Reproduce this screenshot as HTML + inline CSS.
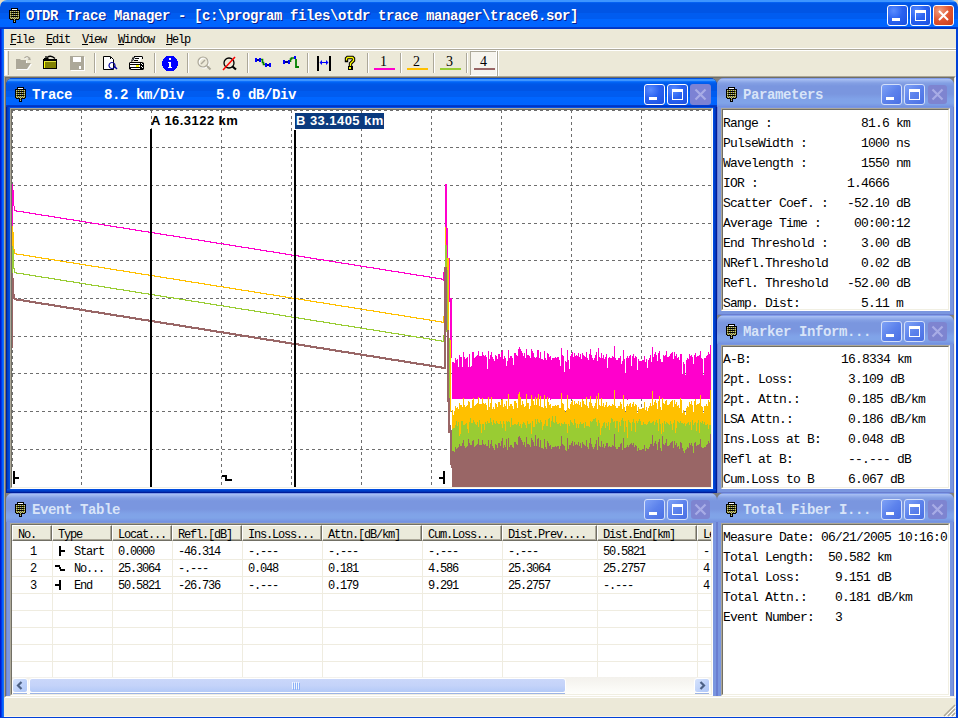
<!DOCTYPE html><html><head><meta charset="utf-8"><style>
*{margin:0;padding:0;box-sizing:border-box}
html,body{width:958px;height:718px;overflow:hidden;background:#E8DCC0;position:relative}
.abs{position:absolute}
.t14{font-family:'Liberation Mono', monospace;font-size:13px;letter-spacing:-0.8px;line-height:14px;white-space:pre;color:#000}
.t12{font-family:'Liberation Mono', monospace;font-size:12px;letter-spacing:-1.2px;line-height:12px;white-space:pre;color:#000}
.tb{font-family:'Liberation Mono', monospace;font-weight:bold;font-size:14px;letter-spacing:-0.4px;line-height:14px;white-space:pre}
.btn{position:absolute;width:21px;height:21px;border:1px solid #fff;border-radius:3px;
 background:radial-gradient(circle at 30% 25%,#5a8cff 0%,#2a62f0 45%,#1a4fe0 100%)}
.btnd{position:absolute;width:21px;height:21px;border-radius:3px;background:#8a90d8}
</style></head><body><svg width="0" height="0" style="position:absolute"><defs><pattern id="dth" width="2" height="2" patternUnits="userSpaceOnUse"><rect width="2" height="2" fill="#808000"/><rect width="1" height="1" fill="#B4B4B0"/><rect x="1" y="1" width="1" height="1" fill="#B4B4B0"/></pattern></defs></svg><div class="abs" style="left:0;top:0;width:958px;height:29px;background:linear-gradient(to bottom,#3D95FF 0px,#3D95FF 2px,#0A6AFF 2px,#0058E6 3px,#0055E5 5px,#0055E5 13px,#005CF0 13px,#005CF0 19px,#0066FF 19px,#0064FF 27px,#0040D0 27px,#0030C0 29px);border-radius:7px 7px 0 0"></div><svg class="abs" style="left:9px;top:8px" width="11" height="15" shape-rendering="crispEdges">
<rect x="2" y="0" width="7" height="3" fill="#000"/><rect x="3" y="1" width="5" height="1" fill="#fff"/>
<rect x="0" y="2" width="11" height="9" fill="#000"/><rect x="1" y="3" width="9" height="8" fill="url(#dth)"/>
<rect x="2" y="4" width="7" height="1" fill="#000"/><rect x="2" y="6" width="7" height="1" fill="#000"/><rect x="2" y="8" width="7" height="1" fill="#000"/>
<rect x="1" y="11" width="9" height="1" fill="#000"/>
<rect x="4" y="11" width="3" height="4" fill="#000"/><rect x="5" y="11" width="1" height="3" fill="url(#dth)"/>
</svg><div class="abs tb" style="left:26px;top:9px;color:#fff;text-shadow:1px 1px 0 #0A1E8E">OTDR Trace Manager - [c:\program files\otdr trace manager\trace6.sor]</div><div class="btn" style="left:887px;top:5px"><div class="abs" style="left:4px;top:12px;width:8px;height:3px;background:#fff"></div></div><div class="btn" style="left:910px;top:5px"><div class="abs" style="left:4px;top:4px;width:11px;height:11px;border:1px solid #fff;border-top-width:3px"></div></div><div class="abs" style="left:933px;top:5px;width:21px;height:21px;border:1px solid #fff;border-radius:3px;background:radial-gradient(circle at 30% 25%,#F0A080 0%,#E05530 50%,#C83A18 100%)">
<svg class="abs" style="left:0;top:0" width="19" height="19"><path d="M5 5 L14 14 M14 5 L5 14" stroke="#fff" stroke-width="2"/></svg></div><div class="abs" style="left:4px;top:29px;width:952px;height:47px;background:#ECE9D8"></div><div class="abs" style="left:4px;top:48px;width:952px;height:1px;background:#fff"></div><div class="abs" style="left:4px;top:49px;width:952px;height:1px;background:#ACA899"></div><div class="abs" style="left:4px;top:50px;width:952px;height:1px;background:#fff"></div><div class="abs" style="left:0;top:29px;width:1px;height:689px;background:#0019CF"></div><div class="abs" style="left:1px;top:29px;width:1px;height:689px;background:#0038E8"></div><div class="abs" style="left:2px;top:29px;width:1px;height:689px;background:#0060FF"></div><div class="abs" style="left:3px;top:29px;width:1px;height:689px;background:#1A6EF5"></div><div class="abs" style="left:956px;top:29px;width:2px;height:689px;background:#0040D8"></div><div class="abs" style="left:0;top:717px;width:958px;height:1px;background:#0040D8"></div><div class="abs t12" style="left:10px;top:34px"><u>F</u>ile</div><div class="abs t12" style="left:46px;top:34px"><u>E</u>dit</div><div class="abs t12" style="left:82px;top:34px"><u>V</u>iew</div><div class="abs t12" style="left:118px;top:34px"><u>W</u>indow</div><div class="abs t12" style="left:166px;top:34px"><u>H</u>elp</div><div class="abs" style="left:5px;top:51px;width:2px;height:24px;background:#fff"></div><div class="abs" style="left:8px;top:51px;width:1px;height:24px;background:#ACA899"></div><div class="abs" style="left:94px;top:53px;width:1px;height:20px;background:#ACA899"></div><div class="abs" style="left:95px;top:53px;width:1px;height:20px;background:#fff"></div><div class="abs" style="left:154px;top:53px;width:1px;height:20px;background:#ACA899"></div><div class="abs" style="left:155px;top:53px;width:1px;height:20px;background:#fff"></div><div class="abs" style="left:187px;top:53px;width:1px;height:20px;background:#ACA899"></div><div class="abs" style="left:188px;top:53px;width:1px;height:20px;background:#fff"></div><div class="abs" style="left:247px;top:53px;width:1px;height:20px;background:#ACA899"></div><div class="abs" style="left:248px;top:53px;width:1px;height:20px;background:#fff"></div><div class="abs" style="left:307px;top:53px;width:1px;height:20px;background:#ACA899"></div><div class="abs" style="left:308px;top:53px;width:1px;height:20px;background:#fff"></div><div class="abs" style="left:367px;top:53px;width:1px;height:20px;background:#ACA899"></div><div class="abs" style="left:368px;top:53px;width:1px;height:20px;background:#fff"></div><div class="abs" style="left:400px;top:53px;width:1px;height:20px;background:#ACA899"></div><div class="abs" style="left:401px;top:53px;width:1px;height:20px;background:#fff"></div><div class="abs" style="left:433px;top:53px;width:1px;height:20px;background:#ACA899"></div><div class="abs" style="left:434px;top:53px;width:1px;height:20px;background:#fff"></div><div class="abs" style="left:466px;top:53px;width:1px;height:20px;background:#ACA899"></div><div class="abs" style="left:467px;top:53px;width:1px;height:20px;background:#fff"></div><svg class="abs" style="left:0;top:50px" width="520" height="26"><path transform="translate(0,-50)" d="M17 60h4l1 1h5v3h5l-4 6h-11z" stroke="none" fill="#FFFFFF" stroke-width="1" /><path transform="translate(0,-50)" d="M16 59h4l1 1h5v3h5l-4 6h-11z" stroke="none" fill="#ACA899" stroke-width="1" /><path transform="translate(0,-50)" d="M25 58.5 q3 -3 5 0.5" stroke="#FFFFFF" fill="none" stroke-width="1.3" /><path transform="translate(0,-50)" d="M24.5 58 q3 -3 5 0.5" stroke="#ACA899" fill="none" stroke-width="1.3" /><path transform="translate(0,-50)" d="M28 59 l2 0.5 l-0.5 -2" stroke="#ACA899" fill="none" stroke-width="1.2" /><rect x="43" y="9" width="14" height="10" fill="#000" shape-rendering="crispEdges"/><rect x="44" y="11" width="12" height="7" fill="#808000" shape-rendering="crispEdges"/><rect x="44" y="11" width="1" height="7" fill="#FFFF00" shape-rendering="crispEdges"/><rect x="44" y="11" width="12" height="1" fill="#E0E040" shape-rendering="crispEdges"/><rect x="44" y="8" width="4" height="2" fill="#000" shape-rendering="crispEdges"/><path transform="translate(0,-50)" d="M47 57.5 q4 -3 8 1" stroke="#000" fill="none" stroke-width="1.3" /><path transform="translate(0,-50)" d="M46 56 l0 2.5 l2.5 0" stroke="#000" fill="none" stroke-width="1.3" /><rect x="71" y="7" width="14" height="14" fill="#FFFFFF" shape-rendering="crispEdges"/><rect x="70" y="6" width="14" height="14" fill="#ACA899" shape-rendering="crispEdges"/><rect x="73" y="7" width="8" height="5" fill="#FFFFFF" shape-rendering="crispEdges"/><rect x="79" y="16" width="2" height="3" fill="#FFFFFF" shape-rendering="crispEdges"/><path transform="translate(0,-50)" d="M103.5 56.5h7l3 3v10h-10z" stroke="#000" fill="#fff" stroke-width="1" /><rect x="110" y="7" width="1" height="2" fill="#000" shape-rendering="crispEdges"/><path transform="translate(0,-50)" d="M112 62.5 a3 3 0 1 0 0.01 0" stroke="#0000A0" fill="none" stroke-width="1.2" /><path transform="translate(0,-50)" d="M114 66 l3 3" stroke="#0000A0" fill="none" stroke-width="1.5" /><path transform="translate(0,-50)" d="M134 56.5h8.5 M133.5 57 l-2 4.5" stroke="#000" fill="none" stroke-width="1.2" /><path transform="translate(0,-50)" d="M134 57h8l-1.5 4h-9z" stroke="none" fill="#fff" stroke-width="1" /><path transform="translate(0,-50)" d="M134.5 57 L132.5 61" stroke="#000" fill="none" stroke-width="1" /><rect x="142" y="7" width="1" height="2" fill="#000" shape-rendering="crispEdges"/><rect x="135" y="8" width="4" height="1" fill="#000" shape-rendering="crispEdges"/><rect x="134" y="10" width="4" height="1" fill="#000" shape-rendering="crispEdges"/><path transform="translate(0,-50)" d="M130 62h12l2 1v6l-1 1h-12l-2-1v-6z" stroke="none" fill="#000" stroke-width="1" /><rect x="130" y="13" width="10" height="1" fill="#fff" shape-rendering="crispEdges"/><rect x="130" y="15" width="10" height="2" fill="#fff" shape-rendering="crispEdges"/><rect x="136" y="15" width="3" height="2" fill="#FFFF00" shape-rendering="crispEdges"/><rect x="131" y="18" width="9" height="1" fill="#fff" shape-rendering="crispEdges"/><rect x="141" y="13" width="1" height="1" fill="#fff" shape-rendering="crispEdges"/><rect x="142" y="14" width="1" height="1" fill="#fff" shape-rendering="crispEdges"/><rect x="141" y="16" width="1" height="1" fill="#fff" shape-rendering="crispEdges"/><rect x="142" y="17" width="1" height="1" fill="#fff" shape-rendering="crispEdges"/><circle cx="170" cy="13.5" r="8" fill="#0000FF" shape-rendering="crispEdges"/><rect x="169" y="8" width="2" height="2" fill="#fff" shape-rendering="crispEdges"/><rect x="169" y="12" width="2" height="5" fill="#fff" shape-rendering="crispEdges"/><rect x="168" y="12" width="1" height="1" fill="#fff" shape-rendering="crispEdges"/><rect x="168" y="17" width="4" height="1" fill="#fff" shape-rendering="crispEdges"/><path transform="translate(0,-50)" d="M209 63 a5 5 0 1 1 -10 0 a5 5 0 1 1 10 0" stroke="#FFFFFF" fill="none" stroke-width="1.2" /><path transform="translate(0,-50)" d="M208 62 a5 5 0 1 1 -10 0 a5 5 0 1 1 10 0" stroke="#ACA899" fill="none" stroke-width="1.2" /><path transform="translate(0,-50)" d="M201 64 l4 -4" stroke="#ACA899" fill="none" stroke-width="1.5" /><path transform="translate(0,-50)" d="M207 66 l3.5 3.5" stroke="#ACA899" fill="none" stroke-width="2" /><path transform="translate(0,-50)" d="M234 63 a5 5 0 1 1 -10 0 a5 5 0 1 1 10 0" stroke="#000" fill="none" stroke-width="1.3" /><path transform="translate(0,-50)" d="M232.5 66.5 l3.5 3" stroke="#000" fill="none" stroke-width="2.2" /><path transform="translate(0,-50)" d="M223 70 L235 57" stroke="#FF0000" fill="none" stroke-width="1.5" /><rect x="255" y="8" width="2" height="4" fill="#0000FF" shape-rendering="crispEdges"/><rect x="257" y="9" width="2" height="2" fill="#000080" shape-rendering="crispEdges"/><rect x="259" y="8" width="2" height="4" fill="#0000FF" shape-rendering="crispEdges"/><path transform="translate(0,-50)" d="M261 59.5 h1.5 v3 h1 v2 h1.5" stroke="#008000" fill="none" stroke-width="1.6" /><rect x="265" y="13" width="2" height="4" fill="#0000FF" shape-rendering="crispEdges"/><rect x="267" y="14" width="2" height="2" fill="#000080" shape-rendering="crispEdges"/><rect x="269" y="13" width="2" height="4" fill="#0000FF" shape-rendering="crispEdges"/><rect x="283" y="10" width="2" height="4" fill="#0000FF" shape-rendering="crispEdges"/><rect x="285" y="11" width="3" height="2" fill="#000080" shape-rendering="crispEdges"/><rect x="288" y="10" width="2" height="4" fill="#0000FF" shape-rendering="crispEdges"/><path transform="translate(0,-50)" d="M290.5 62 v-3 h1 v-1 h3" stroke="#008000" fill="none" stroke-width="1.6" /><rect x="294" y="6" width="2" height="3" fill="#0000FF" shape-rendering="crispEdges"/><path transform="translate(0,-50)" d="M296 59 v8 h3" stroke="#008000" fill="none" stroke-width="1.8" /><rect x="317" y="6" width="2" height="15" fill="#000" shape-rendering="crispEdges"/><rect x="329" y="6" width="2" height="15" fill="#000" shape-rendering="crispEdges"/><rect x="320" y="12" width="8" height="1" fill="#0000FF" shape-rendering="crispEdges"/><path transform="translate(0,-50)" d="M319.5 62.5 l2.5 -2.5 v5 z M328.5 62.5 l-2.5 -2.5 v5 z" stroke="none" fill="#0000FF" stroke-width="1" /><path transform="translate(0,-50)" d="M346.5 60.5 V58.5 L347.5 57.5 H352.5 L353.5 58.5 V60.5 L350.5 63.5 V66" stroke="#000" fill="none" stroke-width="3.4" stroke-linejoin="miter" stroke-linecap="square"/><path transform="translate(0,-50)" d="M346.5 60.5 V58.5 L347.5 57.5 H352.5 L353.5 58.5 V60.5 L350.5 63.5 V66" stroke="#FFFF00" fill="none" stroke-width="1.3" /><rect x="348" y="16" width="5" height="4" fill="#000" shape-rendering="crispEdges"/><rect x="349" y="17" width="2" height="2" fill="#FFFF00" shape-rendering="crispEdges"/><rect x="470" y="1" width="26" height="24" fill="#F6F4EE" shape-rendering="crispEdges"/><rect x="470" y="1" width="26" height="1" fill="#ACA899" shape-rendering="crispEdges"/><rect x="470" y="1" width="1" height="24" fill="#ACA899" shape-rendering="crispEdges"/><rect x="496" y="1" width="1" height="25" fill="#fff" shape-rendering="crispEdges"/><rect x="470" y="25" width="27" height="1" fill="#fff" shape-rendering="crispEdges"/><rect x="374" y="18" width="21" height="2" fill="#FF00CC" shape-rendering="crispEdges"/><text x="383.5" y="16" font-family="Liberation Serif" font-size="14" text-anchor="middle" fill="#000">1</text><rect x="407" y="18" width="21" height="2" fill="#FFC000" shape-rendering="crispEdges"/><text x="416.5" y="16" font-family="Liberation Serif" font-size="14" text-anchor="middle" fill="#000">2</text><rect x="440" y="18" width="21" height="2" fill="#99CC33" shape-rendering="crispEdges"/><text x="449.5" y="16" font-family="Liberation Serif" font-size="14" text-anchor="middle" fill="#000">3</text><rect x="474" y="18" width="21" height="2" fill="#996666" shape-rendering="crispEdges"/><text x="483.5" y="16" font-family="Liberation Serif" font-size="14" text-anchor="middle" fill="#000">4</text></svg><div class="abs" style="left:497px;top:51px;width:1px;height:25px;background:#ACA899"></div><div class="abs" style="left:498px;top:51px;width:1px;height:25px;background:#fff"></div><div class="abs" style="left:4px;top:76px;width:952px;height:622px;background:#808080;border-top:1px solid #ACA899;border-left:1px solid #ACA899;border-right:1px solid #fff;border-bottom:1px solid #fff"></div><div class="abs" style="left:5px;top:77px;width:950px;height:620px;background:#808080;border-top:1px solid #716F64;border-left:1px solid #716F64;border-right:1px solid #F1EFE2;border-bottom:1px solid #F1EFE2"></div><div class="abs" style="left:4px;top:698px;width:952px;height:19px;background:#ECE9D8;border-bottom:1px solid #F8F4E8"></div><svg class="abs" style="left:942px;top:703px" width="14" height="14"><path d="M2 13 L13 2 M6 13 L13 6 M10 13 L13 10" stroke="#ACA899" stroke-width="1.5"/><path d="M3 14 L14 3 M7 14 L14 7 M11 14 L14 11" stroke="#fff" stroke-width="1"/></svg><div class="abs" style="left:0;top:0;width:954px;height:696px;overflow:hidden"><div class="abs" style="left:6px;top:78px;width:711px;height:415px;overflow:hidden"><div class="abs" style="left:0;top:0;width:711px;height:415px;background:#0050E8;border-radius:7px 7px 0 0;border:1px solid #001E9A;border-top:none"></div><div class="abs" style="left:1px;top:20px;width:3px;height:394px;background:linear-gradient(to right,#0036B8,#0055EA)"></div><div class="abs" style="left:707px;top:20px;width:3px;height:394px;background:linear-gradient(to left,#0030B0,#0050E8)"></div><div class="abs" style="left:1px;top:411px;width:709px;height:3px;background:linear-gradient(to top,#0030B0,#0050E8)"></div><div class="abs" style="left:0;top:0;width:711px;height:29px;background:linear-gradient(to bottom,#0050E0 0px,#0050E0 1px,#3D95FF 1px,#3D95FF 3px,#1A7AFF 3px,#0066F8 4px,#0058E8 6px,#0055E5 8px,#0055E5 13px,#005CF0 13px,#005CF0 19px,#0066FF 19px,#0064FF 27px,#0040D0 27px,#0030C0 29px);border-radius:7px 7px 0 0"></div><svg class="abs" style="left:9px;top:9px" width="11" height="15" shape-rendering="crispEdges">
<rect x="2" y="0" width="7" height="3" fill="#000"/><rect x="3" y="1" width="5" height="1" fill="#fff"/>
<rect x="0" y="2" width="11" height="9" fill="#000"/><rect x="1" y="3" width="9" height="8" fill="url(#dth)"/>
<rect x="2" y="4" width="7" height="1" fill="#000"/><rect x="2" y="6" width="7" height="1" fill="#000"/><rect x="2" y="8" width="7" height="1" fill="#000"/>
<rect x="1" y="11" width="9" height="1" fill="#000"/>
<rect x="4" y="11" width="3" height="4" fill="#000"/><rect x="5" y="11" width="1" height="3" fill="url(#dth)"/>
</svg><div class="abs tb" style="left:26px;top:10px;color:#fff">Trace    8.2 km/Div    5.0 dB/Div</div><div class="btn" style="left:638px;top:6px"><div class="abs" style="left:4px;top:12px;width:8px;height:3px;background:#fff"></div></div><div class="btn" style="left:661px;top:6px"><div class="abs" style="left:4px;top:4px;width:11px;height:11px;border:1px solid #fff;border-top-width:3px"></div></div><div class="btnd" style="left:684px;top:6px;background:#7C82D4"><svg class="abs" style="left:0;top:0" width="21" height="21">
<path d="M5.5 5.5 L15.5 15.5 M15.5 5.5 L5.5 15.5" stroke="#A8ACE6" stroke-width="2.2"/></svg></div><div class="abs" style="left:4px;top:30px;width:703px;height:381px;background:#fff;border-top:1px solid #ACA899;border-left:1px solid #ACA899;border-right:1px solid #fff;border-bottom:1px solid #fff"><div class="abs" style="left:0;top:0;width:701px;height:379px;border-top:1px solid #716F64;border-left:1px solid #716F64;border-right:1px solid #F1EFE2;border-bottom:1px solid #F1EFE2;overflow:hidden"><svg class="abs" style="left:0;top:0" width="699" height="377" shape-rendering="crispEdges"><path d="M0.5 0V377 M69.5 0V377 M139.5 0V377 M209.5 0V377 M279.5 0V377 M349.5 0V377 M419.5 0V377 M489.5 0V377 M559.5 0V377 M629.5 0V377 M0 0.5H699 M0 37.5H699 M0 75.5H699 M0 113.5H699 M0 150.5H699 M0 188.5H699 M0 226.5H699 M0 263.5H699 M0 301.5H699 M0 339.5H699" stroke="#6E6E6E" stroke-width="1" stroke-dasharray="3 3" fill="none"/><path d="M440.5 252V289 M441.5 252V289 M442.5 253V289 M443.5 248V289 M444.5 250V289 M445.5 249V289 M446.5 257V289 M447.5 245V289 M448.5 247V289 M449.5 247V289 M450.5 257V289 M451.5 242V289 M452.5 247V289 M453.5 249V289 M454.5 248V289 M455.5 247V289 M456.5 257V289 M457.5 244V289 M458.5 257V289 M459.5 256V289 M460.5 242V289 M461.5 242V289 M462.5 248V289 M463.5 247V289 M464.5 246V289 M465.5 245V289 M466.5 241V289 M467.5 246V288 M468.5 246V289 M469.5 246V289 M470.5 242V289 M471.5 245V289 M472.5 246V289 M473.5 245V289 M474.5 247V289 M475.5 259V289 M476.5 241V289 M477.5 249V289 M478.5 245V289 M479.5 242V289 M480.5 247V289 M481.5 249V289 M482.5 251V289 M483.5 245V289 M484.5 246V289 M485.5 249V289 M486.5 244V289 M487.5 244V289 M488.5 247V289 M489.5 242V289 M490.5 240V289 M491.5 249V289 M492.5 246V289 M493.5 248V289 M494.5 256V289 M495.5 251V289 M496.5 240V289 M497.5 248V289 M498.5 246V289 M499.5 246V289 M500.5 248V289 M501.5 255V289 M502.5 243V289 M503.5 243V289 M504.5 245V289 M505.5 246V289 M506.5 239V289 M507.5 237V289 M508.5 239V289 M509.5 241V289 M510.5 243V289 M511.5 246V289 M512.5 243V289 M513.5 248V289 M514.5 239V290 M515.5 245V289 M516.5 245V289 M517.5 246V289 M518.5 248V289 M519.5 239V289 M520.5 241V289 M521.5 243V289 M522.5 247V289 M523.5 248V289 M524.5 247V289 M525.5 240V289 M526.5 240V289 M527.5 248V289 M528.5 242V289 M529.5 249V289 M530.5 249V289 M531.5 250V289 M532.5 241V289 M533.5 248V289 M534.5 250V289 M535.5 243V289 M536.5 244V289 M537.5 247V288 M538.5 246V290 M539.5 250V289 M540.5 248V289 M541.5 248V289 M542.5 248V289 M543.5 247V289 M544.5 248V289 M545.5 247V289 M546.5 247V289 M547.5 250V289 M548.5 256V289 M549.5 238V289 M550.5 245V289 M551.5 246V289 M552.5 262V289 M553.5 251V289 M554.5 252V289 M555.5 240V289 M556.5 250V289 M557.5 259V289 M558.5 246V289 M559.5 244V289 M560.5 242V289 M561.5 247V289 M562.5 243V289 M563.5 246V289 M564.5 245V289 M565.5 246V289 M566.5 243V289 M567.5 247V289 M568.5 244V289 M569.5 249V289 M570.5 243V289 M571.5 245V289 M572.5 246V289 M573.5 247V289 M574.5 242V289 M575.5 248V289 M576.5 250V289 M577.5 244V289 M578.5 239V289 M579.5 245V289 M580.5 248V289 M581.5 250V289 M582.5 248V289 M583.5 245V289 M584.5 242V289 M585.5 251V289 M586.5 238V289 M587.5 247V289 M588.5 248V289 M589.5 243V289 M590.5 248V289 M591.5 245V289 M592.5 249V289 M593.5 247V289 M594.5 244V289 M595.5 258V289 M596.5 248V289 M597.5 247V289 M598.5 248V289 M599.5 248V289 M600.5 246V289 M601.5 247V289 M602.5 236V289 M603.5 248V289 M604.5 250V289 M605.5 250V289 M606.5 248V289 M607.5 248V289 M608.5 246V289 M609.5 254V289 M610.5 251V289 M611.5 240V289 M612.5 249V289 M613.5 263V289 M614.5 248V289 M615.5 246V290 M616.5 248V289 M617.5 246V289 M618.5 245V289 M619.5 256V289 M620.5 246V289 M621.5 244V289 M622.5 248V289 M623.5 246V289 M624.5 247V289 M625.5 260V289 M626.5 249V289 M627.5 251V289 M628.5 251V289 M629.5 251V289 M630.5 250V289 M631.5 250V289 M632.5 246V289 M633.5 252V289 M634.5 249V289 M635.5 258V289 M636.5 250V289 M637.5 248V289 M638.5 245V289 M639.5 252V289 M640.5 237V289 M641.5 247V289 M642.5 244V289 M643.5 242V289 M644.5 245V289 M645.5 251V289 M646.5 243V289 M647.5 241V289 M648.5 249V289 M649.5 252V289 M650.5 252V289 M651.5 245V289 M652.5 246V289 M653.5 245V289 M654.5 241V289 M655.5 247V289 M656.5 247V289 M657.5 246V289 M658.5 244V289 M659.5 243V289 M660.5 242V289 M661.5 249V289 M662.5 242V289 M663.5 246V289 M664.5 244V289 M665.5 248V289 M666.5 247V289 M667.5 250V289 M668.5 244V289 M669.5 244V289 M670.5 264V289 M671.5 252V289 M672.5 254V289 M673.5 265V289 M674.5 250V289 M675.5 248V289 M676.5 249V289 M677.5 244V289 M678.5 246V289 M679.5 245V289 M680.5 247V289 M681.5 254V289 M682.5 245V289 M683.5 243V289 M684.5 247V289 M685.5 246V289 M686.5 246V289 M687.5 245V289 M688.5 241V289 M689.5 248V289 M690.5 249V289 M691.5 265V289 M692.5 248V289 M693.5 248V289 M694.5 246V289 M695.5 245V289 M696.5 242V289 M697.5 244V289 M698.5 235V289" stroke="#FF00CC" stroke-width="1" fill="none"/><path d="M440.5 309V350 M441.5 309V349 M442.5 310V349 M443.5 305V348 M444.5 307V346 M445.5 306V348 M446.5 305V346 M447.5 302V353 M448.5 304V352 M449.5 304V346 M450.5 301V346 M451.5 299V348 M452.5 304V348 M453.5 306V348 M454.5 305V347 M455.5 304V350 M456.5 299V352 M457.5 301V346 M458.5 303V345 M459.5 303V347 M460.5 299V347 M461.5 299V346 M462.5 305V347 M463.5 304V348 M464.5 303V348 M465.5 302V346 M466.5 298V349 M467.5 303V345 M468.5 303V348 M469.5 303V352 M470.5 299V347 M471.5 302V348 M472.5 303V350 M473.5 302V347 M474.5 304V347 M475.5 304V346 M476.5 299V347 M477.5 306V347 M478.5 302V345 M479.5 300V346 M480.5 304V348 M481.5 306V346 M482.5 308V347 M483.5 302V347 M484.5 303V346 M485.5 306V347 M486.5 301V348 M487.5 301V348 M488.5 304V346 M489.5 299V348 M490.5 297V349 M491.5 306V346 M492.5 303V348 M493.5 305V351 M494.5 299V346 M495.5 308V347 M496.5 297V346 M497.5 305V347 M498.5 303V349 M499.5 303V345 M500.5 305V348 M501.5 306V348 M502.5 300V348 M503.5 300V347 M504.5 302V348 M505.5 303V347 M506.5 297V347 M507.5 295V348 M508.5 296V347 M509.5 298V349 M510.5 300V347 M511.5 303V347 M512.5 300V347 M513.5 305V348 M514.5 297V350 M515.5 302V346 M516.5 302V347 M517.5 303V348 M518.5 305V347 M519.5 297V352 M520.5 298V346 M521.5 300V349 M522.5 304V349 M523.5 295V345 M524.5 304V348 M525.5 297V345 M526.5 298V347 M527.5 305V347 M528.5 299V346 M529.5 306V347 M530.5 306V351 M531.5 307V349 M532.5 299V347 M533.5 305V346 M534.5 307V348 M535.5 300V348 M536.5 301V345 M537.5 304V345 M538.5 303V349 M539.5 307V346 M540.5 305V344 M541.5 305V347 M542.5 305V347 M543.5 304V344 M544.5 305V347 M545.5 304V347 M546.5 304V347 M547.5 307V347 M548.5 304V348 M549.5 295V347 M550.5 302V348 M551.5 303V347 M552.5 304V347 M553.5 308V347 M554.5 309V348 M555.5 298V352 M556.5 307V347 M557.5 303V349 M558.5 303V346 M559.5 301V347 M560.5 299V347 M561.5 304V348 M562.5 300V345 M563.5 303V347 M564.5 302V349 M565.5 303V347 M566.5 300V350 M567.5 304V348 M568.5 301V347 M569.5 306V347 M570.5 301V348 M571.5 303V347 M572.5 303V349 M573.5 304V346 M574.5 299V349 M575.5 305V348 M576.5 307V348 M577.5 301V349 M578.5 297V346 M579.5 302V347 M580.5 305V346 M581.5 307V345 M582.5 305V345 M583.5 302V345 M584.5 300V347 M585.5 308V349 M586.5 296V345 M587.5 304V347 M588.5 305V353 M589.5 300V350 M590.5 305V349 M591.5 302V347 M592.5 306V347 M593.5 304V350 M594.5 301V347 M595.5 301V349 M596.5 305V347 M597.5 304V350 M598.5 305V347 M599.5 305V345 M600.5 303V345 M601.5 304V347 M602.5 294V346 M603.5 305V350 M604.5 307V346 M605.5 307V346 M606.5 305V352 M607.5 305V347 M608.5 304V348 M609.5 302V345 M610.5 308V345 M611.5 297V346 M612.5 306V352 M613.5 306V346 M614.5 305V349 M615.5 303V354 M616.5 305V346 M617.5 303V347 M618.5 302V347 M619.5 301V351 M620.5 303V347 M621.5 301V345 M622.5 305V347 M623.5 303V351 M624.5 304V346 M625.5 309V347 M626.5 306V346 M627.5 308V345 M628.5 308V346 M629.5 308V348 M630.5 307V348 M631.5 307V346 M632.5 304V347 M633.5 309V347 M634.5 306V348 M635.5 307V347 M636.5 307V347 M637.5 305V346 M638.5 302V347 M639.5 302V347 M640.5 295V346 M641.5 304V346 M642.5 301V348 M643.5 299V347 M644.5 302V346 M645.5 308V347 M646.5 300V351 M647.5 299V345 M648.5 306V348 M649.5 309V353 M650.5 296V347 M651.5 302V352 M652.5 303V346 M653.5 302V347 M654.5 298V346 M655.5 304V347 M656.5 304V348 M657.5 303V348 M658.5 301V346 M659.5 300V347 M660.5 299V350 M661.5 306V347 M662.5 299V346 M663.5 303V352 M664.5 301V350 M665.5 305V346 M666.5 304V347 M667.5 307V347 M668.5 302V346 M669.5 302V347 M670.5 306V347 M671.5 309V348 M672.5 311V347 M673.5 308V348 M674.5 307V348 M675.5 305V347 M676.5 306V347 M677.5 301V348 M678.5 303V347 M679.5 302V350 M680.5 304V346 M681.5 311V348 M682.5 302V347 M683.5 301V347 M684.5 304V351 M685.5 303V347 M686.5 303V346 M687.5 302V352 M688.5 299V347 M689.5 305V347 M690.5 306V346 M691.5 306V348 M692.5 305V346 M693.5 305V348 M694.5 303V348 M695.5 302V347 M696.5 299V350 M697.5 301V348 M698.5 293V348" stroke="#99CC33" stroke-width="1" fill="none"/><path d="M440.5 300V319 M441.5 305V318 M442.5 301V318 M443.5 296V315 M444.5 298V311 M445.5 297V316 M446.5 299V312 M447.5 293V326 M448.5 295V324 M449.5 295V311 M450.5 297V311 M451.5 288V315 M452.5 295V315 M453.5 297V314 M454.5 296V313 M455.5 295V319 M456.5 291V323 M457.5 292V312 M458.5 298V308 M459.5 298V313 M460.5 290V313 M461.5 288V310 M462.5 296V312 M463.5 295V314 M464.5 294V315 M465.5 293V312 M466.5 287V317 M467.5 294V310 M468.5 294V314 M469.5 294V323 M470.5 288V314 M471.5 293V314 M472.5 294V320 M473.5 293V312 M474.5 295V314 M475.5 300V311 M476.5 287V313 M477.5 297V313 M478.5 293V308 M479.5 287V312 M480.5 299V315 M481.5 297V310 M482.5 299V313 M483.5 293V314 M484.5 294V311 M485.5 297V313 M486.5 292V314 M487.5 292V314 M488.5 295V311 M489.5 290V314 M490.5 289V318 M491.5 297V311 M492.5 294V314 M493.5 296V321 M494.5 291V311 M495.5 299V312 M496.5 284V311 M497.5 296V312 M498.5 294V317 M499.5 294V308 M500.5 296V315 M501.5 299V315 M502.5 291V314 M503.5 291V314 M504.5 293V315 M505.5 298V314 M506.5 284V312 M507.5 282V316 M508.5 287V314 M509.5 295V318 M510.5 291V314 M511.5 294V312 M512.5 297V313 M513.5 296V315 M514.5 284V318 M515.5 293V311 M516.5 293V314 M517.5 299V314 M518.5 296V313 M519.5 285V324 M520.5 289V311 M521.5 291V317 M522.5 295V317 M523.5 287V309 M524.5 295V314 M525.5 288V309 M526.5 284V312 M527.5 296V313 M528.5 286V310 M529.5 297V312 M530.5 297V320 M531.5 298V316 M532.5 285V314 M533.5 296V310 M534.5 298V316 M535.5 287V316 M536.5 292V309 M537.5 295V308 M538.5 294V317 M539.5 298V311 M540.5 296V306 M541.5 296V312 M542.5 296V313 M543.5 295V306 M544.5 296V312 M545.5 295V314 M546.5 295V314 M547.5 298V313 M548.5 298V316 M549.5 283V313 M550.5 293V314 M551.5 294V314 M552.5 300V312 M553.5 302V314 M554.5 300V314 M555.5 285V323 M556.5 298V314 M557.5 299V316 M558.5 294V310 M559.5 292V312 M560.5 290V313 M561.5 295V315 M562.5 291V309 M563.5 294V313 M564.5 293V318 M565.5 294V314 M566.5 291V318 M567.5 295V314 M568.5 292V312 M569.5 297V314 M570.5 289V314 M571.5 291V313 M572.5 294V318 M573.5 295V312 M574.5 287V316 M575.5 296V316 M576.5 298V316 M577.5 292V317 M578.5 286V311 M579.5 293V312 M580.5 296V311 M581.5 298V309 M582.5 296V309 M583.5 293V308 M584.5 286V312 M585.5 299V316 M586.5 283V310 M587.5 295V313 M588.5 296V325 M589.5 288V318 M590.5 296V316 M591.5 293V313 M592.5 297V312 M593.5 295V318 M594.5 292V313 M595.5 297V316 M596.5 296V312 M597.5 295V320 M598.5 296V313 M599.5 296V308 M600.5 294V309 M601.5 295V312 M602.5 280V311 M603.5 296V318 M604.5 298V311 M605.5 298V311 M606.5 296V322 M607.5 296V312 M608.5 292V316 M609.5 294V310 M610.5 299V308 M611.5 285V311 M612.5 297V322 M613.5 302V311 M614.5 296V317 M615.5 294V328 M616.5 296V310 M617.5 294V312 M618.5 293V313 M619.5 297V321 M620.5 294V312 M621.5 292V309 M622.5 296V313 M623.5 294V322 M624.5 295V311 M625.5 303V313 M626.5 297V311 M627.5 299V309 M628.5 299V311 M629.5 299V315 M630.5 298V315 M631.5 298V312 M632.5 292V314 M633.5 300V314 M634.5 297V315 M635.5 301V314 M636.5 298V312 M637.5 296V311 M638.5 293V313 M639.5 296V313 M640.5 281V312 M641.5 295V311 M642.5 292V315 M643.5 290V312 M644.5 293V310 M645.5 299V313 M646.5 291V321 M647.5 286V309 M648.5 297V314 M649.5 300V324 M650.5 288V313 M651.5 293V322 M652.5 294V311 M653.5 291V314 M654.5 290V312 M655.5 295V313 M656.5 295V314 M657.5 294V315 M658.5 292V311 M659.5 291V314 M660.5 290V320 M661.5 297V313 M662.5 290V310 M663.5 294V323 M664.5 292V318 M665.5 296V311 M666.5 295V312 M667.5 298V313 M668.5 288V311 M669.5 290V313 M670.5 303V313 M671.5 300V314 M672.5 302V313 M673.5 305V316 M674.5 298V314 M675.5 296V313 M676.5 297V312 M677.5 292V315 M678.5 294V312 M679.5 291V320 M680.5 295V310 M681.5 302V315 M682.5 291V313 M683.5 289V312 M684.5 295V321 M685.5 294V313 M686.5 294V310 M687.5 293V323 M688.5 285V312 M689.5 296V313 M690.5 297V311 M691.5 303V314 M692.5 296V312 M693.5 296V315 M694.5 294V315 M695.5 296V314 M696.5 290V319 M697.5 292V315 M698.5 280V315" stroke="#FFC000" stroke-width="1" fill="none"/><path d="M440.5 341V377 M441.5 341V377 M442.5 342V377 M443.5 337V377 M444.5 339V377 M445.5 338V377 M446.5 337V377 M447.5 334V377 M448.5 336V377 M449.5 336V377 M450.5 333V377 M451.5 330V377 M452.5 336V377 M453.5 338V377 M454.5 337V377 M455.5 336V377 M456.5 329V377 M457.5 333V377 M458.5 335V377 M459.5 335V377 M460.5 331V377 M461.5 330V377 M462.5 337V377 M463.5 336V377 M464.5 335V377 M465.5 334V377 M466.5 329V377 M467.5 335V377 M468.5 335V377 M469.5 335V377 M470.5 330V377 M471.5 334V377 M472.5 335V377 M473.5 334V377 M474.5 336V377 M475.5 336V377 M476.5 330V377 M477.5 338V377 M478.5 334V377 M479.5 330V377 M480.5 336V377 M481.5 338V377 M482.5 340V377 M483.5 334V377 M484.5 335V377 M485.5 338V377 M486.5 333V377 M487.5 333V377 M488.5 336V377 M489.5 331V377 M490.5 328V377 M491.5 338V377 M492.5 335V377 M493.5 337V377 M494.5 329V377 M495.5 340V377 M496.5 328V377 M497.5 337V377 M498.5 335V377 M499.5 335V377 M500.5 337V377 M501.5 338V377 M502.5 332V377 M503.5 332V377 M504.5 334V377 M505.5 335V377 M506.5 327V377 M507.5 326V377 M508.5 328V377 M509.5 330V377 M510.5 332V377 M511.5 335V377 M512.5 332V377 M513.5 337V377 M514.5 327V377 M515.5 334V377 M516.5 334V377 M517.5 335V377 M518.5 337V377 M519.5 328V377 M520.5 330V377 M521.5 332V377 M522.5 336V377 M523.5 325V377 M524.5 336V377 M525.5 329V377 M526.5 328V377 M527.5 337V377 M528.5 330V377 M529.5 338V377 M530.5 338V377 M531.5 339V377 M532.5 329V377 M533.5 337V377 M534.5 339V377 M535.5 331V377 M536.5 333V377 M537.5 336V377 M538.5 335V377 M539.5 339V377 M540.5 337V377 M541.5 337V377 M542.5 337V377 M543.5 336V377 M544.5 337V377 M545.5 336V377 M546.5 336V377 M547.5 339V377 M548.5 336V377 M549.5 326V377 M550.5 334V377 M551.5 335V377 M552.5 336V377 M553.5 340V377 M554.5 341V377 M555.5 328V377 M556.5 339V377 M557.5 335V377 M558.5 335V377 M559.5 333V377 M560.5 331V377 M561.5 336V377 M562.5 332V377 M563.5 335V377 M564.5 334V377 M565.5 335V377 M566.5 332V377 M567.5 336V377 M568.5 333V377 M569.5 338V377 M570.5 332V377 M571.5 334V377 M572.5 335V377 M573.5 336V377 M574.5 330V377 M575.5 337V377 M576.5 339V377 M577.5 333V377 M578.5 328V377 M579.5 334V377 M580.5 337V377 M581.5 339V377 M582.5 337V377 M583.5 334V377 M584.5 330V377 M585.5 340V377 M586.5 327V377 M587.5 336V377 M588.5 337V377 M589.5 331V377 M590.5 337V377 M591.5 334V377 M592.5 338V377 M593.5 336V377 M594.5 333V377 M595.5 333V377 M596.5 337V377 M597.5 336V377 M598.5 337V377 M599.5 337V377 M600.5 335V377 M601.5 336V377 M602.5 324V377 M603.5 337V377 M604.5 339V377 M605.5 339V377 M606.5 337V377 M607.5 337V377 M608.5 334V377 M609.5 333V377 M610.5 340V377 M611.5 328V377 M612.5 338V377 M613.5 338V377 M614.5 337V377 M615.5 335V377 M616.5 337V377 M617.5 335V377 M618.5 334V377 M619.5 333V377 M620.5 335V377 M621.5 333V377 M622.5 337V377 M623.5 335V377 M624.5 336V377 M625.5 341V377 M626.5 338V377 M627.5 340V377 M628.5 340V377 M629.5 340V377 M630.5 339V377 M631.5 339V377 M632.5 335V377 M633.5 341V377 M634.5 338V377 M635.5 339V377 M636.5 339V377 M637.5 337V377 M638.5 334V377 M639.5 334V377 M640.5 325V377 M641.5 336V377 M642.5 333V377 M643.5 331V377 M644.5 334V377 M645.5 340V377 M646.5 332V377 M647.5 329V377 M648.5 338V377 M649.5 341V377 M650.5 326V377 M651.5 334V377 M652.5 335V377 M653.5 333V377 M654.5 329V377 M655.5 336V377 M656.5 336V377 M657.5 335V377 M658.5 333V377 M659.5 332V377 M660.5 331V377 M661.5 338V377 M662.5 331V377 M663.5 335V377 M664.5 333V377 M665.5 337V377 M666.5 336V377 M667.5 339V377 M668.5 332V377 M669.5 333V377 M670.5 338V377 M671.5 341V377 M672.5 343V377 M673.5 340V377 M674.5 339V377 M675.5 337V377 M676.5 338V377 M677.5 333V377 M678.5 335V377 M679.5 333V377 M680.5 336V377 M681.5 343V377 M682.5 333V377 M683.5 332V377 M684.5 336V377 M685.5 335V377 M686.5 335V377 M687.5 334V377 M688.5 329V377 M689.5 337V377 M690.5 338V377 M691.5 338V377 M692.5 337V377 M693.5 337V377 M694.5 335V377 M695.5 334V377 M696.5 331V377 M697.5 333V377 M698.5 324V377" stroke="#996666" stroke-width="1" fill="none"/><rect x="0" y="74" width="1" height="43" fill="#FF00CC"/><rect x="1" y="80" width="1" height="16" fill="#FF00CC"/><rect x="2" y="96" width="1" height="5" fill="#FF00CC"/><path d="M2 100h3v1h-3zM4 101h8v1h-8zM11 102h7v1h-7zM17 103h7v1h-7zM23 104h7v1h-7zM29 105h8v1h-8zM36 106h7v1h-7zM42 107h7v1h-7zM48 108h7v1h-7zM54 109h8v1h-8zM61 110h7v1h-7zM67 111h7v1h-7zM73 112h7v1h-7zM79 113h8v1h-8zM86 114h7v1h-7zM92 115h7v1h-7zM98 116h7v1h-7zM104 117h8v1h-8zM111 118h7v1h-7zM117 119h7v1h-7zM123 120h7v1h-7zM129 121h8v1h-8zM136 122h7v1h-7zM142 123h7v1h-7zM148 124h7v1h-7zM154 125h8v1h-8zM161 126h7v1h-7zM167 127h7v1h-7zM173 128h7v1h-7zM179 129h8v1h-8zM186 130h7v1h-7zM192 131h7v1h-7zM198 132h7v1h-7zM204 133h8v1h-8zM211 134h7v1h-7zM217 135h7v1h-7zM223 136h7v1h-7zM229 137h8v1h-8zM236 138h7v1h-7zM242 139h7v1h-7zM248 140h7v1h-7zM254 141h8v1h-8zM261 142h7v1h-7zM267 143h7v1h-7zM273 144h7v1h-7zM279 145h8v1h-8zM286 146h7v1h-7zM292 147h7v1h-7zM298 148h7v1h-7zM304 149h8v1h-8zM311 150h7v1h-7zM317 151h7v1h-7zM323 152h7v1h-7zM329 153h8v1h-8zM336 154h7v1h-7zM342 155h7v1h-7zM348 156h7v1h-7zM354 157h8v1h-8zM361 158h7v1h-7zM367 159h7v1h-7zM373 160h7v1h-7zM379 161h8v1h-8zM386 162h7v1h-7zM392 163h7v1h-7zM398 164h7v1h-7zM404 165h8v1h-8zM411 166h7v1h-7zM417 167h7v1h-7zM423 168h7v1h-7zM429 169h3v1h-3z" fill="#FF00CC"/><rect x="431" y="162" width="1" height="9" fill="#FF00CC"/><rect x="433" y="74" width="2" height="46" fill="#FF00CC"/><rect x="434" y="118" width="2" height="34" fill="#FF00CC"/><rect x="436" y="148" width="2" height="44" fill="#FF00CC"/><rect x="438" y="188" width="2" height="60" fill="#FF00CC"/><rect x="0" y="116" width="1" height="21" fill="#FFC000"/><rect x="1" y="122" width="1" height="18" fill="#FFC000"/><rect x="2" y="139" width="1" height="5" fill="#FFC000"/><path d="M2 143h3v1h-3zM4 144h8v1h-8zM11 145h7v1h-7zM17 146h7v1h-7zM23 147h7v1h-7zM29 148h8v1h-8zM36 149h7v1h-7zM42 150h7v1h-7zM48 151h7v1h-7zM54 152h8v1h-8zM61 153h7v1h-7zM67 154h7v1h-7zM73 155h7v1h-7zM79 156h8v1h-8zM86 157h7v1h-7zM92 158h7v1h-7zM98 159h7v1h-7zM104 160h8v1h-8zM111 161h7v1h-7zM117 162h7v1h-7zM123 163h7v1h-7zM129 164h8v1h-8zM136 165h7v1h-7zM142 166h7v1h-7zM148 167h7v1h-7zM154 168h8v1h-8zM161 169h7v1h-7zM167 170h7v1h-7zM173 171h7v1h-7zM179 172h8v1h-8zM186 173h7v1h-7zM192 174h7v1h-7zM198 175h7v1h-7zM204 176h8v1h-8zM211 177h7v1h-7zM217 178h7v1h-7zM223 179h7v1h-7zM229 180h8v1h-8zM236 181h7v1h-7zM242 182h7v1h-7zM248 183h7v1h-7zM254 184h8v1h-8zM261 185h7v1h-7zM267 186h7v1h-7zM273 187h7v1h-7zM279 188h8v1h-8zM286 189h7v1h-7zM292 190h7v1h-7zM298 191h7v1h-7zM304 192h8v1h-8zM311 193h7v1h-7zM317 194h7v1h-7zM323 195h7v1h-7zM329 196h8v1h-8zM336 197h7v1h-7zM342 198h7v1h-7zM348 199h7v1h-7zM354 200h8v1h-8zM361 201h7v1h-7zM367 202h7v1h-7zM373 203h7v1h-7zM379 204h8v1h-8zM386 205h7v1h-7zM392 206h7v1h-7zM398 207h7v1h-7zM404 208h8v1h-8zM411 209h7v1h-7zM417 210h7v1h-7zM423 211h7v1h-7zM429 212h3v1h-3z" fill="#FFC000"/><rect x="431" y="206" width="1" height="7" fill="#FFC000"/><rect x="433" y="117" width="1" height="35" fill="#FFC000"/><rect x="435" y="148" width="2" height="84" fill="#FFC000"/><rect x="438" y="230" width="1" height="72" fill="#FFC000"/><rect x="0" y="136" width="1" height="27" fill="#99CC33"/><rect x="1" y="140" width="1" height="19" fill="#99CC33"/><rect x="2" y="158" width="1" height="5" fill="#99CC33"/><path d="M2 162h3v1h-3zM4 163h8v1h-8zM11 164h7v1h-7zM17 165h7v1h-7zM23 166h7v1h-7zM29 167h8v1h-8zM36 168h7v1h-7zM42 169h7v1h-7zM48 170h7v1h-7zM54 171h8v1h-8zM61 172h7v1h-7zM67 173h7v1h-7zM73 174h7v1h-7zM79 175h8v1h-8zM86 176h7v1h-7zM92 177h7v1h-7zM98 178h7v1h-7zM104 179h8v1h-8zM111 180h7v1h-7zM117 181h7v1h-7zM123 182h7v1h-7zM129 183h8v1h-8zM136 184h7v1h-7zM142 185h7v1h-7zM148 186h7v1h-7zM154 187h8v1h-8zM161 188h7v1h-7zM167 189h7v1h-7zM173 190h7v1h-7zM179 191h8v1h-8zM186 192h7v1h-7zM192 193h7v1h-7zM198 194h7v1h-7zM204 195h8v1h-8zM211 196h7v1h-7zM217 197h7v1h-7zM223 198h7v1h-7zM229 199h8v1h-8zM236 200h7v1h-7zM242 201h7v1h-7zM248 202h7v1h-7zM254 203h8v1h-8zM261 204h7v1h-7zM267 205h7v1h-7zM273 206h7v1h-7zM279 207h8v1h-8zM286 208h7v1h-7zM292 209h7v1h-7zM298 210h7v1h-7zM304 211h8v1h-8zM311 212h7v1h-7zM317 213h7v1h-7zM323 214h7v1h-7zM329 215h8v1h-8zM336 216h7v1h-7zM342 217h7v1h-7zM348 218h7v1h-7zM354 219h8v1h-8zM361 220h7v1h-7zM367 221h7v1h-7zM373 222h7v1h-7zM379 223h8v1h-8zM386 224h7v1h-7zM392 225h7v1h-7zM398 226h7v1h-7zM404 227h8v1h-8zM411 228h7v1h-7zM417 229h7v1h-7zM423 230h7v1h-7zM429 231h3v1h-3z" fill="#99CC33"/><rect x="431" y="225" width="1" height="7" fill="#99CC33"/><rect x="433" y="135" width="2" height="27" fill="#99CC33"/><rect x="434" y="160" width="2" height="62" fill="#99CC33"/><rect x="437" y="228" width="1" height="74" fill="#99CC33"/><rect x="0" y="163" width="1" height="75" fill="#996666"/><rect x="1" y="168" width="1" height="21" fill="#996666"/><rect x="2" y="184" width="1" height="5" fill="#996666"/><path d="M2 188h3v2h-3zM4 189h8v2h-8zM11 190h7v2h-7zM17 191h7v2h-7zM23 192h7v2h-7zM29 193h8v2h-8zM36 194h7v2h-7zM42 195h7v2h-7zM48 196h7v2h-7zM54 197h8v2h-8zM61 198h7v2h-7zM67 199h7v2h-7zM73 200h7v2h-7zM79 201h8v2h-8zM86 202h7v2h-7zM92 203h7v2h-7zM98 204h7v2h-7zM104 205h8v2h-8zM111 206h7v2h-7zM117 207h7v2h-7zM123 208h7v2h-7zM129 209h8v2h-8zM136 210h7v2h-7zM142 211h7v2h-7zM148 212h7v2h-7zM154 213h8v2h-8zM161 214h7v2h-7zM167 215h7v2h-7zM173 216h7v2h-7zM179 217h8v2h-8zM186 218h7v2h-7zM192 219h7v2h-7zM198 220h7v2h-7zM204 221h8v2h-8zM211 222h7v2h-7zM217 223h7v2h-7zM223 224h7v2h-7zM229 225h8v2h-8zM236 226h7v2h-7zM242 227h7v2h-7zM248 228h7v2h-7zM254 229h8v2h-8zM261 230h7v2h-7zM267 231h7v2h-7zM273 232h7v2h-7zM279 233h8v2h-8zM286 234h7v2h-7zM292 235h7v2h-7zM298 236h7v2h-7zM304 237h8v2h-8zM311 238h7v2h-7zM317 239h7v2h-7zM323 240h7v2h-7zM329 241h8v2h-8zM336 242h7v2h-7zM342 243h7v2h-7zM348 244h7v2h-7zM354 245h8v2h-8zM361 246h7v2h-7zM367 247h7v2h-7zM373 248h7v2h-7zM379 249h8v2h-8zM386 250h7v2h-7zM392 251h7v2h-7zM398 252h7v2h-7zM404 253h8v2h-8zM411 254h7v2h-7zM417 255h7v2h-7zM423 256h7v2h-7zM429 257h3v2h-3z" fill="#996666"/><rect x="432" y="157" width="3" height="63" fill="#996666"/><rect x="432" y="220" width="2" height="39" fill="#996666"/><rect x="435" y="220" width="2" height="72" fill="#996666"/><rect x="436" y="288" width="2" height="35" fill="#996666"/><rect x="438" y="315" width="1" height="40" fill="#996666"/><rect x="439" y="320" width="1" height="38" fill="#996666"/><rect x="138" y="19" width="2" height="358" fill="#000"/><rect x="282" y="20" width="2" height="357" fill="#000"/><rect x="283" y="3" width="89" height="16" fill="#0A3A7E"/><rect x="0" y="359" width="8" height="16" fill="#fff"/><rect x="1" y="361" width="2" height="13" fill="#000"/><rect x="3" y="367" width="4" height="2" fill="#000"/><rect x="431" y="361" width="2" height="13" fill="#000"/><rect x="427" y="367" width="4" height="2" fill="#000"/><path d="M210 365h5v4h5v2h-7v-4h-3z" fill="#000"/></svg><div class="abs" style="left:139px;top:3px;font:bold 13px 'Liberation Sans', sans-serif;color:#000;letter-spacing:0.45px;white-space:pre">A 16.3122 km</div><div class="abs" style="left:284px;top:3px;font:bold 13px 'Liberation Sans', sans-serif;color:#fff;letter-spacing:0.45px;white-space:pre">B 33.1405 km</div></div></div></div><div class="abs" style="left:717px;top:78px;width:237px;height:237px;overflow:hidden"><div class="abs" style="left:0;top:0;width:237px;height:237px;background:#7A96DF;border-radius:7px 7px 0 0;border:1px solid #6A7ED0;border-top:none"></div><div class="abs" style="left:0;top:0;width:237px;height:29px;background:linear-gradient(to bottom,#6E8CE6 0px,#A6BDF2 1.5px,#96B0EC 3px,#84A0E4 5px,#7A96DF 8px,#7A96DF 16px,#80A2E8 21px,#80A4E8 25px,#7896E2 28px,#7090E0 29px);border-radius:7px 7px 0 0"></div><svg class="abs" style="left:9px;top:9px" width="11" height="15" shape-rendering="crispEdges">
<rect x="2" y="0" width="7" height="3" fill="#000"/><rect x="3" y="1" width="5" height="1" fill="#fff"/>
<rect x="0" y="2" width="11" height="9" fill="#000"/><rect x="1" y="3" width="9" height="8" fill="url(#dth)"/>
<rect x="2" y="4" width="7" height="1" fill="#000"/><rect x="2" y="6" width="7" height="1" fill="#000"/><rect x="2" y="8" width="7" height="1" fill="#000"/>
<rect x="1" y="11" width="9" height="1" fill="#000"/>
<rect x="4" y="11" width="3" height="4" fill="#000"/><rect x="5" y="11" width="1" height="3" fill="url(#dth)"/>
</svg><div class="abs tb" style="left:26px;top:10px;color:#D8E4F8">Parameters</div><div class="btn" style="left:164px;top:6px;background:linear-gradient(135deg,#7FA2F6 0%,#5C82EC 50%,#4A70E4 100%);border-color:#D4E0FA"><div class="abs" style="left:4px;top:12px;width:8px;height:3px;background:#fff"></div></div><div class="btn" style="left:187px;top:6px;background:linear-gradient(135deg,#7FA2F6 0%,#5C82EC 50%,#4A70E4 100%);border-color:#D4E0FA"><div class="abs" style="left:4px;top:4px;width:11px;height:11px;border:1px solid #fff;border-top-width:3px"></div></div><div class="btnd" style="left:211px;top:7px;width:19px;height:19px;background:#7E84D0"><svg class="abs" style="left:0;top:0" width="19" height="19">
<path d="M4.5 4.5 L14.5 14.5 M14.5 4.5 L4.5 14.5" stroke="#A8ACE6" stroke-width="2.2"/></svg></div><div class="abs" style="left:4px;top:30px;width:229px;height:203px;background:#fff;border-top:1px solid #ACA899;border-left:1px solid #ACA899;border-right:1px solid #fff;border-bottom:1px solid #fff"><div class="abs" style="left:0;top:0;width:227px;height:201px;border-top:1px solid #716F64;border-left:1px solid #716F64;border-right:1px solid #F1EFE2;border-bottom:1px solid #F1EFE2;overflow:hidden"><div class="abs t14" style="left:0px;top:7px">Range :</div><div class="abs t14" style="left:124px;top:7px">  81.6 km</div><div class="abs t14" style="left:0px;top:27px">PulseWidth :</div><div class="abs t14" style="left:124px;top:27px">  1000 ns</div><div class="abs t14" style="left:0px;top:47px">Wavelength :</div><div class="abs t14" style="left:124px;top:47px">  1550 nm</div><div class="abs t14" style="left:0px;top:67px">IOR :</div><div class="abs t14" style="left:124px;top:67px">1.4666</div><div class="abs t14" style="left:0px;top:87px">Scatter Coef. :</div><div class="abs t14" style="left:124px;top:87px">-52.10 dB</div><div class="abs t14" style="left:0px;top:107px">Average Time :</div><div class="abs t14" style="left:124px;top:107px"> 00:00:12</div><div class="abs t14" style="left:0px;top:127px">End Threshold :</div><div class="abs t14" style="left:124px;top:127px">  3.00 dB</div><div class="abs t14" style="left:0px;top:147px">NRefl.Threshold</div><div class="abs t14" style="left:124px;top:147px">  0.02 dB</div><div class="abs t14" style="left:0px;top:167px">Refl. Threshold</div><div class="abs t14" style="left:124px;top:167px">-52.00 dB</div><div class="abs t14" style="left:0px;top:187px">Samp. Dist:</div><div class="abs t14" style="left:124px;top:187px">  5.11 m</div></div></div></div><div class="abs" style="left:717px;top:315px;width:237px;height:178px;overflow:hidden"><div class="abs" style="left:0;top:0;width:237px;height:178px;background:#7A96DF;border-radius:7px 7px 0 0;border:1px solid #6A7ED0;border-top:none"></div><div class="abs" style="left:0;top:0;width:237px;height:29px;background:linear-gradient(to bottom,#6E8CE6 0px,#A6BDF2 1.5px,#96B0EC 3px,#84A0E4 5px,#7A96DF 8px,#7A96DF 16px,#80A2E8 21px,#80A4E8 25px,#7896E2 28px,#7090E0 29px);border-radius:7px 7px 0 0"></div><svg class="abs" style="left:9px;top:9px" width="11" height="15" shape-rendering="crispEdges">
<rect x="2" y="0" width="7" height="3" fill="#000"/><rect x="3" y="1" width="5" height="1" fill="#fff"/>
<rect x="0" y="2" width="11" height="9" fill="#000"/><rect x="1" y="3" width="9" height="8" fill="url(#dth)"/>
<rect x="2" y="4" width="7" height="1" fill="#000"/><rect x="2" y="6" width="7" height="1" fill="#000"/><rect x="2" y="8" width="7" height="1" fill="#000"/>
<rect x="1" y="11" width="9" height="1" fill="#000"/>
<rect x="4" y="11" width="3" height="4" fill="#000"/><rect x="5" y="11" width="1" height="3" fill="url(#dth)"/>
</svg><div class="abs tb" style="left:26px;top:10px;color:#D8E4F8">Marker Inform...</div><div class="btn" style="left:164px;top:6px;background:linear-gradient(135deg,#7FA2F6 0%,#5C82EC 50%,#4A70E4 100%);border-color:#D4E0FA"><div class="abs" style="left:4px;top:12px;width:8px;height:3px;background:#fff"></div></div><div class="btn" style="left:187px;top:6px;background:linear-gradient(135deg,#7FA2F6 0%,#5C82EC 50%,#4A70E4 100%);border-color:#D4E0FA"><div class="abs" style="left:4px;top:4px;width:11px;height:11px;border:1px solid #fff;border-top-width:3px"></div></div><div class="btnd" style="left:211px;top:7px;width:19px;height:19px;background:#7E84D0"><svg class="abs" style="left:0;top:0" width="19" height="19">
<path d="M4.5 4.5 L14.5 14.5 M14.5 4.5 L4.5 14.5" stroke="#A8ACE6" stroke-width="2.2"/></svg></div><div class="abs" style="left:4px;top:30px;width:229px;height:144px;background:#fff;border-top:1px solid #ACA899;border-left:1px solid #ACA899;border-right:1px solid #fff;border-bottom:1px solid #fff"><div class="abs" style="left:0;top:0;width:227px;height:142px;border-top:1px solid #716F64;border-left:1px solid #716F64;border-right:1px solid #F1EFE2;border-bottom:1px solid #F1EFE2;overflow:hidden"><div class="abs t14" style="left:0px;top:6px">A-B:</div><div class="abs t14" style="left:118px;top:6px">16.8334 km</div><div class="abs t14" style="left:0px;top:26px">2pt. Loss:</div><div class="abs t14" style="left:118px;top:26px"> 3.109 dB</div><div class="abs t14" style="left:0px;top:46px">2pt. Attn.:</div><div class="abs t14" style="left:118px;top:46px"> 0.185 dB/km</div><div class="abs t14" style="left:0px;top:66px">LSA Attn.:</div><div class="abs t14" style="left:118px;top:66px"> 0.186 dB/km</div><div class="abs t14" style="left:0px;top:86px">Ins.Loss at B:</div><div class="abs t14" style="left:118px;top:86px"> 0.048 dB</div><div class="abs t14" style="left:0px;top:106px">Refl at B:</div><div class="abs t14" style="left:118px;top:106px"> --.--- dB</div><div class="abs t14" style="left:0px;top:126px">Cum.Loss to B</div><div class="abs t14" style="left:118px;top:126px"> 6.067 dB</div></div></div></div><div class="abs" style="left:6px;top:493px;width:711px;height:207px;overflow:hidden"><div class="abs" style="left:0;top:0;width:711px;height:207px;background:#7A96DF;border-radius:7px 7px 0 0;border:1px solid #6A7ED0;border-top:none"></div><div class="abs" style="left:0;top:0;width:711px;height:29px;background:linear-gradient(to bottom,#6E8CE6 0px,#A6BDF2 1.5px,#96B0EC 3px,#84A0E4 5px,#7A96DF 8px,#7A96DF 16px,#80A2E8 21px,#80A4E8 25px,#7896E2 28px,#7090E0 29px);border-radius:7px 7px 0 0"></div><svg class="abs" style="left:9px;top:9px" width="11" height="15" shape-rendering="crispEdges">
<rect x="2" y="0" width="7" height="3" fill="#000"/><rect x="3" y="1" width="5" height="1" fill="#fff"/>
<rect x="0" y="2" width="11" height="9" fill="#000"/><rect x="1" y="3" width="9" height="8" fill="url(#dth)"/>
<rect x="2" y="4" width="7" height="1" fill="#000"/><rect x="2" y="6" width="7" height="1" fill="#000"/><rect x="2" y="8" width="7" height="1" fill="#000"/>
<rect x="1" y="11" width="9" height="1" fill="#000"/>
<rect x="4" y="11" width="3" height="4" fill="#000"/><rect x="5" y="11" width="1" height="3" fill="url(#dth)"/>
</svg><div class="abs tb" style="left:26px;top:10px;color:#D8E4F8">Event Table</div><div class="btn" style="left:638px;top:6px;background:linear-gradient(135deg,#7FA2F6 0%,#5C82EC 50%,#4A70E4 100%);border-color:#D4E0FA"><div class="abs" style="left:4px;top:12px;width:8px;height:3px;background:#fff"></div></div><div class="btn" style="left:661px;top:6px;background:linear-gradient(135deg,#7FA2F6 0%,#5C82EC 50%,#4A70E4 100%);border-color:#D4E0FA"><div class="abs" style="left:4px;top:4px;width:11px;height:11px;border:1px solid #fff;border-top-width:3px"></div></div><div class="btnd" style="left:685px;top:7px;width:19px;height:19px;background:#7E84D0"><svg class="abs" style="left:0;top:0" width="19" height="19">
<path d="M4.5 4.5 L14.5 14.5 M14.5 4.5 L4.5 14.5" stroke="#A8ACE6" stroke-width="2.2"/></svg></div><div class="abs" style="left:4px;top:30px;width:703px;height:173px;background:#fff;border-top:1px solid #ACA899;border-left:1px solid #ACA899;border-right:1px solid #fff;border-bottom:1px solid #fff"><div class="abs" style="left:0;top:0;width:701px;height:171px;border-top:1px solid #716F64;border-left:1px solid #716F64;border-right:1px solid #F1EFE2;border-bottom:1px solid #F1EFE2;overflow:hidden"><div class="abs" style="left:0;top:0;width:800px;height:16px;background:#EBEADB"></div><div class="abs" style="left:0px;top:0;width:40px;height:16px;border-top:1px solid #fff;border-left:1px solid #fff;border-right:1px solid #716F64;border-bottom:1px solid #716F64"><div class="abs" style="left:0;top:0;width:38px;height:14px;border-right:1px solid #ACA899;border-bottom:1px solid #ACA899"></div></div><div class="abs t12" style="left:6px;top:4px">No.</div><div class="abs" style="left:40px;top:0;width:60px;height:16px;border-top:1px solid #fff;border-left:1px solid #fff;border-right:1px solid #716F64;border-bottom:1px solid #716F64"><div class="abs" style="left:0;top:0;width:58px;height:14px;border-right:1px solid #ACA899;border-bottom:1px solid #ACA899"></div></div><div class="abs t12" style="left:46px;top:4px">Type</div><div class="abs" style="left:100px;top:0;width:60px;height:16px;border-top:1px solid #fff;border-left:1px solid #fff;border-right:1px solid #716F64;border-bottom:1px solid #716F64"><div class="abs" style="left:0;top:0;width:58px;height:14px;border-right:1px solid #ACA899;border-bottom:1px solid #ACA899"></div></div><div class="abs t12" style="left:106px;top:4px">Locat...</div><div class="abs" style="left:160px;top:0;width:70px;height:16px;border-top:1px solid #fff;border-left:1px solid #fff;border-right:1px solid #716F64;border-bottom:1px solid #716F64"><div class="abs" style="left:0;top:0;width:68px;height:14px;border-right:1px solid #ACA899;border-bottom:1px solid #ACA899"></div></div><div class="abs t12" style="left:166px;top:4px">Refl.[dB]</div><div class="abs" style="left:230px;top:0;width:80px;height:16px;border-top:1px solid #fff;border-left:1px solid #fff;border-right:1px solid #716F64;border-bottom:1px solid #716F64"><div class="abs" style="left:0;top:0;width:78px;height:14px;border-right:1px solid #ACA899;border-bottom:1px solid #ACA899"></div></div><div class="abs t12" style="left:236px;top:4px">Ins.Loss...</div><div class="abs" style="left:310px;top:0;width:100px;height:16px;border-top:1px solid #fff;border-left:1px solid #fff;border-right:1px solid #716F64;border-bottom:1px solid #716F64"><div class="abs" style="left:0;top:0;width:98px;height:14px;border-right:1px solid #ACA899;border-bottom:1px solid #ACA899"></div></div><div class="abs t12" style="left:316px;top:4px">Attn.[dB/km]</div><div class="abs" style="left:410px;top:0;width:80px;height:16px;border-top:1px solid #fff;border-left:1px solid #fff;border-right:1px solid #716F64;border-bottom:1px solid #716F64"><div class="abs" style="left:0;top:0;width:78px;height:14px;border-right:1px solid #ACA899;border-bottom:1px solid #ACA899"></div></div><div class="abs t12" style="left:416px;top:4px">Cum.Loss...</div><div class="abs" style="left:490px;top:0;width:95px;height:16px;border-top:1px solid #fff;border-left:1px solid #fff;border-right:1px solid #716F64;border-bottom:1px solid #716F64"><div class="abs" style="left:0;top:0;width:93px;height:14px;border-right:1px solid #ACA899;border-bottom:1px solid #ACA899"></div></div><div class="abs t12" style="left:496px;top:4px">Dist.Prev....</div><div class="abs" style="left:585px;top:0;width:100px;height:16px;border-top:1px solid #fff;border-left:1px solid #fff;border-right:1px solid #716F64;border-bottom:1px solid #716F64"><div class="abs" style="left:0;top:0;width:98px;height:14px;border-right:1px solid #ACA899;border-bottom:1px solid #ACA899"></div></div><div class="abs t12" style="left:591px;top:4px">Dist.End[km]</div><div class="abs" style="left:685px;top:0;width:83px;height:16px;border-top:1px solid #fff;border-left:1px solid #fff;border-right:1px solid #716F64;border-bottom:1px solid #716F64"><div class="abs" style="left:0;top:0;width:81px;height:14px;border-right:1px solid #ACA899;border-bottom:1px solid #ACA899"></div></div><div class="abs t12" style="left:691px;top:4px">Length</div><div class="abs" style="left:0;top:34px;width:800px;height:1px;background:#EFECE0"></div><div class="abs" style="left:0;top:51px;width:800px;height:1px;background:#EFECE0"></div><div class="abs" style="left:0;top:68px;width:800px;height:1px;background:#EFECE0"></div><div class="abs" style="left:0;top:85px;width:800px;height:1px;background:#EFECE0"></div><div class="abs" style="left:0;top:102px;width:800px;height:1px;background:#EFECE0"></div><div class="abs" style="left:0;top:119px;width:800px;height:1px;background:#EFECE0"></div><div class="abs" style="left:0;top:136px;width:800px;height:1px;background:#EFECE0"></div><div class="abs" style="left:0;top:153px;width:800px;height:1px;background:#EFECE0"></div><div class="abs" style="left:40px;top:16px;width:1px;height:140px;background:#EFECE0"></div><div class="abs" style="left:100px;top:16px;width:1px;height:140px;background:#EFECE0"></div><div class="abs" style="left:160px;top:16px;width:1px;height:140px;background:#EFECE0"></div><div class="abs" style="left:230px;top:16px;width:1px;height:140px;background:#EFECE0"></div><div class="abs" style="left:310px;top:16px;width:1px;height:140px;background:#EFECE0"></div><div class="abs" style="left:410px;top:16px;width:1px;height:140px;background:#EFECE0"></div><div class="abs" style="left:490px;top:16px;width:1px;height:140px;background:#EFECE0"></div><div class="abs" style="left:585px;top:16px;width:1px;height:140px;background:#EFECE0"></div><div class="abs" style="left:685px;top:16px;width:1px;height:140px;background:#EFECE0"></div><div class="abs t12" style="left:18px;top:21px">1</div><div class="abs t12" style="left:62px;top:21px">Start</div><div class="abs t12" style="left:106px;top:21px">0.0000</div><div class="abs t12" style="left:166px;top:21px">-46.314</div><div class="abs t12" style="left:236px;top:21px">-.---</div><div class="abs t12" style="left:316px;top:21px">-.---</div><div class="abs t12" style="left:416px;top:21px">-.---</div><div class="abs t12" style="left:496px;top:21px">-.---</div><div class="abs t12" style="left:591px;top:21px">50.5821</div><div class="abs t12" style="left:691px;top:21px">-.---</div><div class="abs t12" style="left:18px;top:38px">2</div><div class="abs t12" style="left:62px;top:38px">No...</div><div class="abs t12" style="left:106px;top:38px">25.3064</div><div class="abs t12" style="left:166px;top:38px">-.---</div><div class="abs t12" style="left:236px;top:38px">0.048</div><div class="abs t12" style="left:316px;top:38px">0.181</div><div class="abs t12" style="left:416px;top:38px">4.586</div><div class="abs t12" style="left:496px;top:38px">25.3064</div><div class="abs t12" style="left:591px;top:38px">25.2757</div><div class="abs t12" style="left:691px;top:38px">4.586</div><div class="abs t12" style="left:18px;top:55px">3</div><div class="abs t12" style="left:62px;top:55px">End</div><div class="abs t12" style="left:106px;top:55px">50.5821</div><div class="abs t12" style="left:166px;top:55px">-26.736</div><div class="abs t12" style="left:236px;top:55px">-.---</div><div class="abs t12" style="left:316px;top:55px">0.179</div><div class="abs t12" style="left:416px;top:55px">9.291</div><div class="abs t12" style="left:496px;top:55px">25.2757</div><div class="abs t12" style="left:591px;top:55px">-.---</div><div class="abs t12" style="left:691px;top:55px">4.705</div><svg class="abs" style="left:43px;top:20px" width="12" height="50" shape-rendering="crispEdges"><rect x="4" y="1" width="2" height="10" fill="#000"/><rect x="6" y="5" width="4" height="2" fill="#000"/><path d="M0 20h5v2h1v2h4v2h-5v-2h-1v-2h-4z" fill="#000"/><rect x="4" y="35" width="2" height="10" fill="#000"/><rect x="0" y="39" width="4" height="2" fill="#000"/></svg><div class="abs" style="left:0;top:152px;width:700px;height:17px;background:linear-gradient(to bottom,#F3F1EC,#FEFEFB)"></div><div class="abs" style="left:1px;top:168px;width:14px;height:1px;background:#9DB4E4"></div><div class="abs" style="left:0px;top:153px;width:16px;height:15px;border:1px solid #fff;border-radius:3px;background:linear-gradient(135deg,#D6E3FC,#BCD0F9 60%,#B0C8F8)"></div><svg class="abs" style="left:0px;top:153px" width="16" height="15"><path d="M9.5 4 L6 7.5 L9.5 11" stroke="#4D6185" stroke-width="2.2" fill="none"/></svg><div class="abs" style="left:18px;top:168px;width:535px;height:1px;background:#9DB4E4"></div><div class="abs" style="left:17px;top:153px;width:537px;height:15px;border:1px solid #fff;border-radius:3px;background:linear-gradient(to bottom,#CAD7FA,#C4D3F9 50%,#B4CAF7)"></div><svg class="abs" style="left:280px;top:157px" width="10" height="8" shape-rendering="crispEdges"><rect x="0" y="0" width="1" height="7" fill="#EEF4FE"/><rect x="1" y="1" width="1" height="7" fill="#8CB0F8"/><rect x="2" y="0" width="1" height="7" fill="#EEF4FE"/><rect x="3" y="1" width="1" height="7" fill="#8CB0F8"/><rect x="4" y="0" width="1" height="7" fill="#EEF4FE"/><rect x="5" y="1" width="1" height="7" fill="#8CB0F8"/><rect x="6" y="0" width="1" height="7" fill="#EEF4FE"/><rect x="7" y="1" width="1" height="7" fill="#8CB0F8"/></svg><div class="abs" style="left:683px;top:168px;width:14px;height:1px;background:#9DB4E4"></div><div class="abs" style="left:682px;top:153px;width:16px;height:15px;border:1px solid #fff;border-radius:3px;background:linear-gradient(135deg,#D6E3FC,#BCD0F9 60%,#B0C8F8)"></div><svg class="abs" style="left:682px;top:153px" width="16" height="15"><path d="M6.5 4 L10 7.5 L6.5 11" stroke="#4D6185" stroke-width="2.2" fill="none"/></svg></div></div></div><div class="abs" style="left:717px;top:493px;width:237px;height:207px;overflow:hidden"><div class="abs" style="left:0;top:0;width:237px;height:207px;background:#7A96DF;border-radius:7px 7px 0 0;border:1px solid #6A7ED0;border-top:none"></div><div class="abs" style="left:0;top:0;width:237px;height:29px;background:linear-gradient(to bottom,#6E8CE6 0px,#A6BDF2 1.5px,#96B0EC 3px,#84A0E4 5px,#7A96DF 8px,#7A96DF 16px,#80A2E8 21px,#80A4E8 25px,#7896E2 28px,#7090E0 29px);border-radius:7px 7px 0 0"></div><svg class="abs" style="left:9px;top:9px" width="11" height="15" shape-rendering="crispEdges">
<rect x="2" y="0" width="7" height="3" fill="#000"/><rect x="3" y="1" width="5" height="1" fill="#fff"/>
<rect x="0" y="2" width="11" height="9" fill="#000"/><rect x="1" y="3" width="9" height="8" fill="url(#dth)"/>
<rect x="2" y="4" width="7" height="1" fill="#000"/><rect x="2" y="6" width="7" height="1" fill="#000"/><rect x="2" y="8" width="7" height="1" fill="#000"/>
<rect x="1" y="11" width="9" height="1" fill="#000"/>
<rect x="4" y="11" width="3" height="4" fill="#000"/><rect x="5" y="11" width="1" height="3" fill="url(#dth)"/>
</svg><div class="abs tb" style="left:26px;top:10px;color:#D8E4F8">Total Fiber I...</div><div class="btn" style="left:164px;top:6px;background:linear-gradient(135deg,#7FA2F6 0%,#5C82EC 50%,#4A70E4 100%);border-color:#D4E0FA"><div class="abs" style="left:4px;top:12px;width:8px;height:3px;background:#fff"></div></div><div class="btn" style="left:187px;top:6px;background:linear-gradient(135deg,#7FA2F6 0%,#5C82EC 50%,#4A70E4 100%);border-color:#D4E0FA"><div class="abs" style="left:4px;top:4px;width:11px;height:11px;border:1px solid #fff;border-top-width:3px"></div></div><div class="btnd" style="left:211px;top:7px;width:19px;height:19px;background:#7E84D0"><svg class="abs" style="left:0;top:0" width="19" height="19">
<path d="M4.5 4.5 L14.5 14.5 M14.5 4.5 L4.5 14.5" stroke="#A8ACE6" stroke-width="2.2"/></svg></div><div class="abs" style="left:4px;top:30px;width:229px;height:173px;background:#fff;border-top:1px solid #ACA899;border-left:1px solid #ACA899;border-right:1px solid #fff;border-bottom:1px solid #fff"><div class="abs" style="left:0;top:0;width:227px;height:171px;border-top:1px solid #716F64;border-left:1px solid #716F64;border-right:1px solid #F1EFE2;border-bottom:1px solid #F1EFE2;overflow:hidden"><div class="abs t14" style="left:0px;top:6px">Measure Date: 06/21/2005 10:16:0</div><div class="abs t14" style="left:0px;top:26px">Total Length:  50.582 km</div><div class="abs t14" style="left:0px;top:46px">Total Loss:     9.151 dB</div><div class="abs t14" style="left:0px;top:66px">Total Attn.:    0.181 dB/km</div><div class="abs t14" style="left:0px;top:86px">Event Number:   3</div></div></div></div></div></body></html>
